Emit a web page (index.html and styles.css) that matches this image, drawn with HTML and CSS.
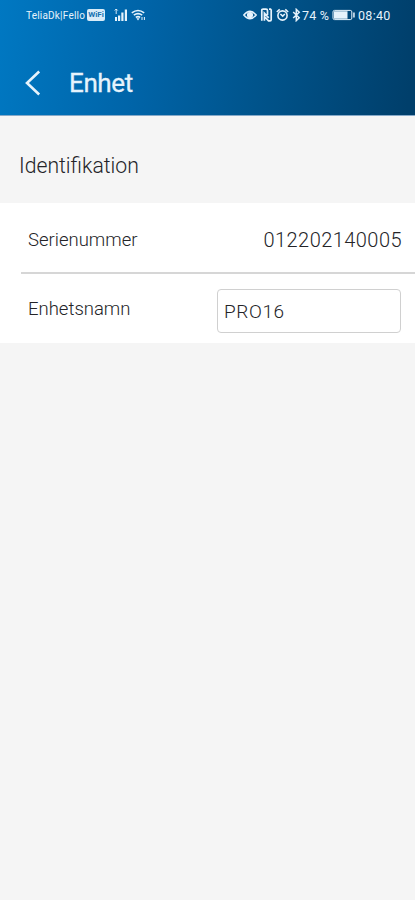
FILE: index.html
```html
<!DOCTYPE html>
<html lang="sv">
<head>
<meta charset="utf-8">
<meta name="viewport" content="width=device-width, initial-scale=1">
<title>Enhet</title>
<link rel="stylesheet" href="styles.css">
</head>
<body>
<header class="header">
  <div class="status">
    <div class="status-left">
      <span class="carrier">TeliaDk|Fello</span>
      <span class="wifi-call">WiFi</span>
      <svg class="signal" width="14" height="14" viewBox="0 0 14 14" fill="currentColor">
        <path d="M1 9h2v4H1zM4 7.5h2.2V13H4zM7.3 4.5h2.2V13H7.3zM10.8 1.5H13V13h-2.2z"/>
        <path d="M2.2 1v5M.7 2.5 2.2 1l1.5 1.5" fill="none" stroke="currentColor" stroke-width=".9"/>
      </svg>
      <svg class="wifi" width="15" height="14" viewBox="0 0 15 14" fill="none" stroke="currentColor" stroke-width="1.6">
        <path d="M.8 4.8Q7 .1 13.2 4.8M2.8 7.2q4.2-3.1 8.4 0M4.8 9.4q2.2-1.5 4.4 0"/>
        <path d="M5.4 10.3h3.2L7 12.5z" fill="currentColor" stroke="none"/>
        <path d="M11 9v3M13.4 9v3" stroke-width="1"/>
      </svg>
    </div>
    <div class="status-right">
      <svg class="eye" width="14" height="12" viewBox="0 0 14 12" fill="none" stroke="currentColor" stroke-width="1.4">
        <path d="M.8 6Q7-1.6 13.2 6 7 13.6.8 6z"/>
        <circle cx="7" cy="6" r="2.4" fill="currentColor"/>
      </svg>
      <svg class="nfc" width="13" height="14" viewBox="0 0 13 14" fill="none" stroke="currentColor">
        <path d="M1.8 12.8V2.2Q1.8 1.2 3 1.2h3q1.5 0 1.5 1.5V7M4.4 12.8V5.2l4.3 4.6M11.2 1.2v10.6q0 1-1.2 1H8.5L5 9.2M9 1.2h2.2" stroke-width="1.7"/>
      </svg>
      <svg class="alarm" width="13" height="14" viewBox="0 0 13 14" fill="none" stroke="currentColor" stroke-width="1.6">
        <circle cx="6.5" cy="7.5" r="4.6"/>
        <path d="M.8 4 3.7 1.4M12.2 4 9.3 1.4M4.4 6l2.3 2.2L8.8 6"/>
      </svg>
      <svg class="bluetooth" width="9" height="14" viewBox="0 0 9 14" fill="none" stroke="currentColor" stroke-width="1.5">
        <path d="m1.2 4 6 5.8L4.3 12.6V1.4l2.9 2.8-6 5.8"/>
      </svg>
      <span class="percent">74 %</span>
      <svg class="battery" width="24" height="12" viewBox="0 0 24 12" fill="currentColor">
        <rect x="1" y="1.4" width="18.8" height="9.2" rx="1.5" fill="none" stroke="currentColor"/>
        <path d="M2 2.3h13.5v7.4H2zM21.2 3.5h1.5v5h-1.5z"/>
      </svg>
      <span class="time">08:40</span>
    </div>
  </div>
  <div class="toolbar">
    <svg class="back" width="18" height="28" viewBox="0 0 18 28" fill="none" stroke="currentColor" stroke-width="2.6">
      <path d="M15.2 2.5 3 14l12.2 11.5"/>
    </svg>
    <h1 class="title">Enhet</h1>
  </div>
</header>
<main>
  <h2 class="section">Identifikation</h2>
  <div class="card">
    <div class="row">
      <span class="label">Serienummer</span>
      <span class="serial">012202140005</span>
    </div>
    <div class="row row-name">
      <label class="label" for="name">Enhetsnamn</label>
      <input class="input" id="name" type="text" value="PRO16">
    </div>
  </div>
</main>
</body>
</html>
```
FILE: styles.css
```css
* { box-sizing: border-box; }

body {
  margin: 0;
  min-height: 100vh;
  background: #f5f5f5;
  color: #242428;
  font-family: Roboto, "Liberation Sans", sans-serif;
}

.header {
  height: 116px;
  color: #e6f3fc;
  background: linear-gradient(97deg, #0078c2 0%, #0064a8 34%, #00548c 62%, #003f6b 98%);
  border-bottom: 1px solid #86a9c8;
}

.status {
  display: flex;
  justify-content: space-between;
  height: 30px;
  padding: 0 22px 0 26px;
}

.status-left, .status-right { display: flex; align-items: center; white-space: nowrap; }
.carrier { width: 59px; font-size: 10px; letter-spacing: 0.2px; }
.wifi-call {
  width: 18px;
  height: 12px;
  margin-left: 2px;
  border-radius: 2px;
  background: #d9ecf8;
  color: #1672b2;
  font-size: 8px;
  font-weight: 700;
  line-height: 12px;
  text-align: center;
}
.signal { margin-left: 9px; }
.wifi { margin-left: 3px; }
.nfc { margin-left: 3px; }
.alarm { margin-left: 3px; }
.bluetooth { margin-left: 3px; }
.percent { width: 30px; margin-left: 1px; font-size: 12.5px; letter-spacing: 0.2px; }
.battery { margin-left: 0; }
.time { width: 35px; margin-left: 2px; font-size: 12.5px; letter-spacing: 0.3px; }

.toolbar {
  display: flex;
  align-items: center;
  height: 84px;
  padding-left: 24px;
  margin-top: -1px;
}

.back { margin-top: 24px; }
.title {
  margin: 23px 0 0 27px;
  font-size: 26px;
  font-weight: 400;
  line-height: 32px;
  letter-spacing: -0.4px;
  -webkit-text-stroke: 0.3px currentColor;
}

.section {
  height: 87px;
  margin: 0;
  padding: 34px 0 0 19px;
  font-size: 21.2px;
  font-weight: 300;
  line-height: 32px;
}

.card { height: 140px; background: #fff; }
.row {
  display: flex;
  align-items: center;
  justify-content: space-between;
  height: 71px;
  margin-left: 21px;
  padding: 4px 13px 0 7px;
  border-bottom: 2px solid #d6d6d6;
}
.row-name { height: 69px; padding: 1px 14px 0 7px; border-bottom: 0; }
.label { font-size: 18.5px; font-weight: 300; }
.serial { font-size: 20px; font-weight: 300; letter-spacing: 0.45px; }

.input {
  width: 184px;
  height: 44px;
  margin-top: 4px;
  padding: 0 6px;
  border: 1.5px solid #d0d0d0;
  border-radius: 4px;
  background: #fff;
  color: inherit;
  font: 300 19px Roboto, "Liberation Sans", sans-serif;
  letter-spacing: 0.6px;
  outline: 0;
}
```
